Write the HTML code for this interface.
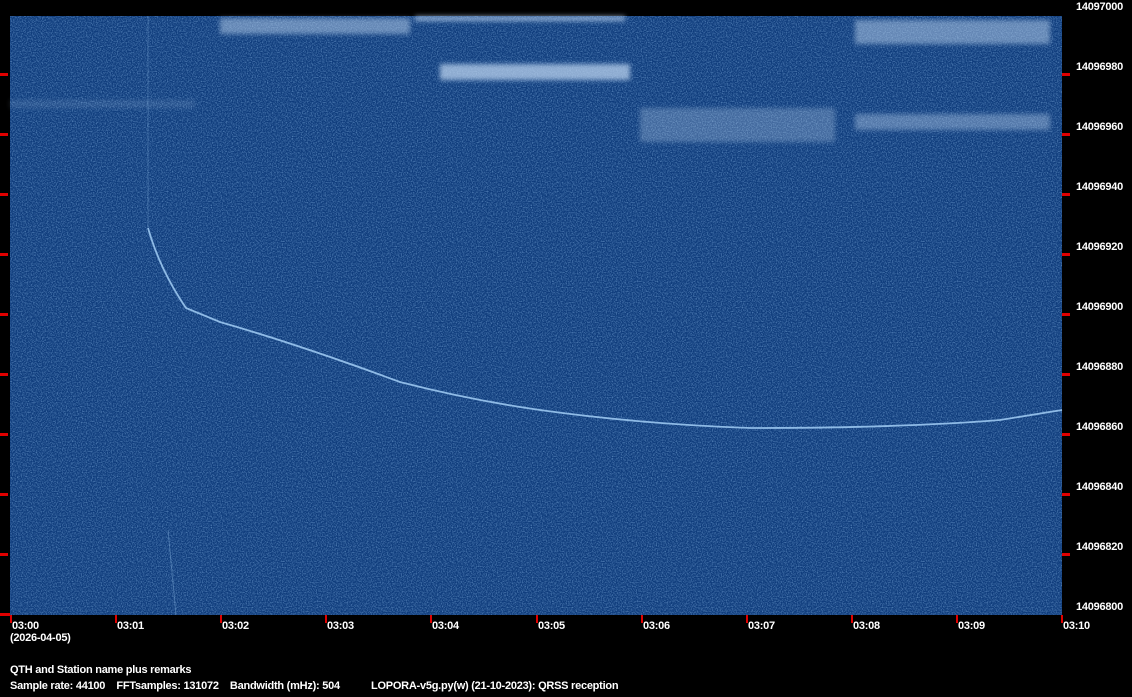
<!DOCTYPE html>
<html><head><style>
html,body{margin:0;padding:0;background:#000;width:1132px;height:697px;overflow:hidden;font-family:"Liberation Sans",sans-serif;}
.t{position:absolute;color:#fff;font-size:11px;font-weight:bold;white-space:pre;line-height:12px;letter-spacing:-0.25px}
</style></head><body>
<svg width="1132" height="697" style="position:absolute;left:0;top:0">
<defs>
<filter id="n" x="0" y="0" width="100%" height="100%">
<feTurbulence type="fractalNoise" baseFrequency="0.8" numOctaves="2" seed="3"/>
<feColorMatrix type="matrix" values="0 0 0 0 0.2  0 0 0 0 0.4  0 0 0 0 0.7  0 0 0 2 -0.8"/>
</filter>
<filter id="b"><feGaussianBlur stdDeviation="2.5"/></filter>
</defs>
<rect x="10" y="16" width="1052" height="599" fill="#0f3c7c"/>
<rect x="10" y="16" width="1052" height="599" filter="url(#n)" opacity="0.7"/>
<g filter="url(#b)" fill="#b8d0ec">
<rect x="220" y="18" width="190" height="16" opacity="0.5"/>
<rect x="415" y="16" width="210" height="5" opacity="0.7"/>
<rect x="440" y="64" width="190" height="16" opacity="0.75"/>
<rect x="855" y="20" width="195" height="24" opacity="0.5"/>
<rect x="640" y="108" width="195" height="34" opacity="0.3"/>
<rect x="855" y="114" width="195" height="16" opacity="0.4"/>
<rect x="10" y="100" width="185" height="8" opacity="0.15"/>
</g>
<g fill="none" stroke="#8fbbe6" stroke-width="1.8">
<path d="M148,16 L148,228" stroke-width="1" opacity="0.3"/>
<path d="M148,228 Q160,270 186,308 L220,322 Q300,345 400,382 Q470,400 540,410 Q640,424 750,428 Q900,428 1000,420 L1062,410"/>
<path d="M168,530 L176,615" stroke-width="1" opacity="0.4"/>
</g>
<g fill="#e00000">
<rect x="0" y="73" width="8" height="3"/><rect x="0" y="133" width="8" height="3"/><rect x="0" y="193" width="8" height="3"/><rect x="0" y="253" width="8" height="3"/><rect x="0" y="313" width="8" height="3"/><rect x="0" y="373" width="8" height="3"/><rect x="0" y="433" width="8" height="3"/><rect x="0" y="493" width="8" height="3"/><rect x="0" y="553" width="8" height="3"/><rect x="0" y="613" width="10" height="3"/>
<rect x="1062" y="73" width="8" height="3"/><rect x="1062" y="133" width="8" height="3"/><rect x="1062" y="193" width="8" height="3"/><rect x="1062" y="253" width="8" height="3"/><rect x="1062" y="313" width="8" height="3"/><rect x="1062" y="373" width="8" height="3"/><rect x="1062" y="433" width="8" height="3"/><rect x="1062" y="493" width="8" height="3"/><rect x="1062" y="553" width="8" height="3"/>
<rect x="10" y="615" width="2" height="8"/><rect x="115" y="615" width="2" height="8"/><rect x="220" y="615" width="2" height="8"/><rect x="325" y="615" width="2" height="8"/><rect x="430" y="615" width="2" height="8"/><rect x="536" y="615" width="2" height="8"/><rect x="641" y="615" width="2" height="8"/><rect x="746" y="615" width="2" height="8"/><rect x="851" y="615" width="2" height="8"/><rect x="956" y="615" width="2" height="8"/><rect x="1061" y="615" width="2" height="8"/>
</g>
</svg>
<div class="t" style="left:1076px;top:1px">14097000</div>
<div class="t" style="left:1076px;top:61px">14096980</div>
<div class="t" style="left:1076px;top:121px">14096960</div>
<div class="t" style="left:1076px;top:181px">14096940</div>
<div class="t" style="left:1076px;top:241px">14096920</div>
<div class="t" style="left:1076px;top:301px">14096900</div>
<div class="t" style="left:1076px;top:361px">14096880</div>
<div class="t" style="left:1076px;top:421px">14096860</div>
<div class="t" style="left:1076px;top:481px">14096840</div>
<div class="t" style="left:1076px;top:541px">14096820</div>
<div class="t" style="left:1076px;top:601px">14096800</div>
<div class="t" style="left:12px;top:620px">03:00</div>
<div class="t" style="left:117px;top:620px">03:01</div>
<div class="t" style="left:222px;top:620px">03:02</div>
<div class="t" style="left:327px;top:620px">03:03</div>
<div class="t" style="left:432px;top:620px">03:04</div>
<div class="t" style="left:538px;top:620px">03:05</div>
<div class="t" style="left:643px;top:620px">03:06</div>
<div class="t" style="left:748px;top:620px">03:07</div>
<div class="t" style="left:853px;top:620px">03:08</div>
<div class="t" style="left:958px;top:620px">03:09</div>
<div class="t" style="left:1063px;top:620px">03:10</div>
<div class="t" style="left:10px;top:632px">(2026-04-05)</div>
<div class="t" style="left:10px;top:664px">QTH and Station name plus remarks</div>
<div class="t" style="left:10px;top:680px">Sample rate: 44100    FFTsamples: 131072    Bandwidth (mHz): 504</div>
<div class="t" style="left:371px;top:680px">LOPORA-v5g.py(w) (21-10-2023): QRSS reception</div>
</body></html>
